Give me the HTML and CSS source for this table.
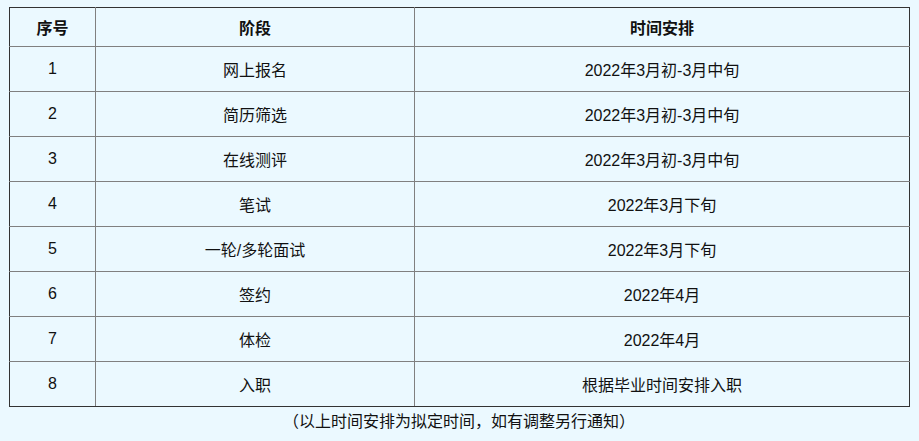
FILE: index.html
```html
<!DOCTYPE html>
<html lang="zh-CN">
<head>
<meta charset="utf-8">
<link rel="stylesheet" href="styles.css">
</head>
<body>
<div class="wrap">
<table class="schedule">
  <colgroup>
    <col class="c-no">
    <col class="c-stage">
    <col class="c-time">
  </colgroup>
  <thead>
    <tr><th>序号</th><th>阶段</th><th>时间安排</th></tr>
  </thead>
  <tbody>
    <tr><td>1</td><td>网上报名</td><td>2022年3月初-3月中旬</td></tr>
    <tr><td>2</td><td>简历筛选</td><td>2022年3月初-3月中旬</td></tr>
    <tr><td>3</td><td>在线测评</td><td>2022年3月初-3月中旬</td></tr>
    <tr><td>4</td><td>笔试</td><td>2022年3月下旬</td></tr>
    <tr><td>5</td><td>一轮/多轮面试</td><td>2022年3月下旬</td></tr>
    <tr><td>6</td><td>签约</td><td>2022年4月</td></tr>
    <tr><td>7</td><td>体检</td><td>2022年4月</td></tr>
    <tr><td>8</td><td>入职</td><td>根据毕业时间安排入职</td></tr>
  </tbody>
</table>
<p class="note">（以上时间安排为拟定时间，如有调整另行通知）</p>
</div>
</body>
</html>
```
FILE: styles.css
```css
html, body {
  margin: 0;
  padding: 0;
  background: #ebf9ff;
}
body {
  font-family: "Liberation Sans", "Noto Sans CJK SC", sans-serif;
  font-size: 16px;
  color: #111;
}
.wrap {
  padding: 7px 0 0 9px;
  width: 900px;
}
.schedule {
  width: 900px;
  border-collapse: collapse;
  border: 1px solid #333;
  table-layout: fixed;
}
.c-no { width: 86px; }
.c-stage { width: 319px; }
.c-time { width: 495px; }
.schedule th,
.schedule td {
  border: 1px solid #808080;
  text-align: center;
  padding: 0;
  font-weight: normal;
}
.schedule th {
  height: 38px;
  font-weight: bold;
}
.schedule td {
  height: 44px;
}
.schedule thead tr th { border-top-color: #333; }
.schedule tr > :first-child { border-left-color: #333; }
.schedule tr > :last-child { border-right-color: #333; }
.schedule tbody tr:last-child td { border-bottom-color: #333; }
.note {
  margin: 0;
  padding-top: 3px;
  text-align: center;
  line-height: 24px;
}
```
